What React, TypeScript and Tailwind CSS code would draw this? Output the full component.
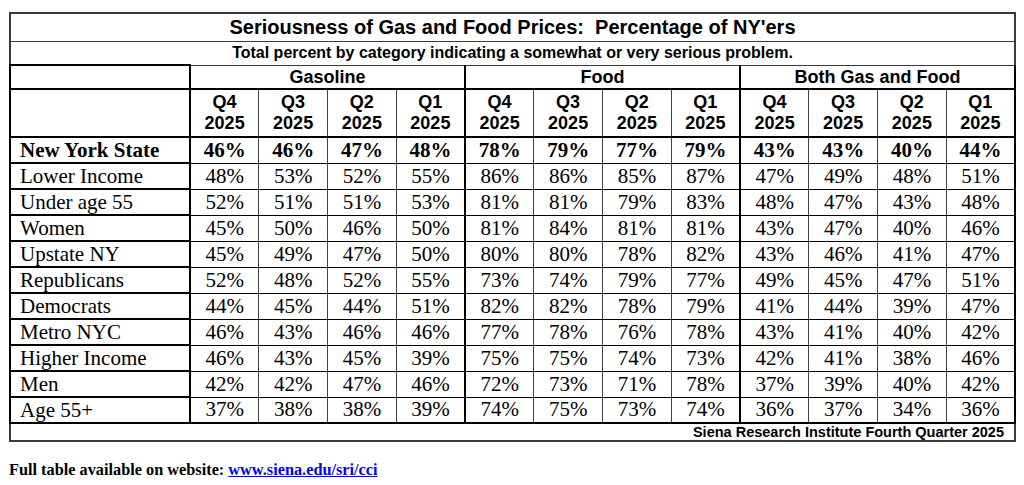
const groups = ['Gasoline', 'Food', 'Both Gas and Food'];
const quarters = ['Q4', 'Q3', 'Q2', 'Q1'];

const stateRow = [46, 46, 47, 48, 78, 79, 77, 79, 43, 43, 40, 44];

const rows: [string, number[]][] = [
  ['Lower Income', [48, 53, 52, 55, 86, 86, 85, 87, 47, 49, 48, 51]],
  ['Under age 55', [52, 51, 51, 53, 81, 81, 79, 83, 48, 47, 43, 48]],
  ['Women', [45, 50, 46, 50, 81, 84, 81, 81, 43, 47, 40, 46]],
  ['Upstate NY', [45, 49, 47, 50, 80, 80, 78, 82, 43, 46, 41, 47]],
  ['Republicans', [52, 48, 52, 55, 73, 74, 79, 77, 49, 45, 47, 51]],
  ['Democrats', [44, 45, 44, 51, 82, 82, 78, 79, 41, 44, 39, 47]],
  ['Metro NYC', [46, 43, 46, 46, 77, 78, 76, 78, 43, 41, 40, 42]],
  ['Higher Income', [46, 43, 45, 39, 75, 75, 74, 73, 42, 41, 38, 46]],
  ['Men', [42, 42, 47, 46, 72, 73, 71, 78, 37, 39, 40, 42]],
  ['Age 55+', [37, 38, 38, 39, 74, 75, 73, 74, 36, 37, 34, 36]],
];

// vertical borders: thick black at group edges, thin inside a group
function colBorder(i: number) {
  const left = i % 4 === 0 ? 'border-l-2 border-l-black' : 'border-l border-l-[#444]';
  const right = i === 11 ? 'border-r-2 border-r-black' : '';
  return `${left} ${right}`;
}

const sans = "font-['Liberation_Sans',Arial,sans-serif]";
const serif = "font-['Liberation_Serif','Times_New_Roman',serif]";

function DataRow({ label, values, bold }: { label: string; values: number[]; bold?: boolean }) {
  return (
    <tr className="h-[26px]">
      <td
        className={`border-2 border-black pl-[9px] text-left text-[21px] leading-none text-black ${serif} ${bold ? 'font-bold' : ''}`}
      >
        {label}
      </td>
      {values.map((v, i) => (
        <td
          key={i}
          className={`border-y border-y-black ${colBorder(i)} text-center text-[21px] leading-none text-black ${serif} ${bold ? 'font-bold' : ''}`}
        >
          {v}%
        </td>
      ))}
    </tr>
  );
}

export default function App() {
  return (
    <div className="min-h-[485px] w-[1024px] bg-white pl-[9px] pt-[12px]">
      <table className="w-[1007px] table-fixed border-collapse border-2 border-[#3a3a3a]">
        <colgroup>
          <col className="w-[180px]" />
          {Array.from({ length: 12 }).map((_, i) => (
            <col key={i} />
          ))}
        </colgroup>
        <tbody>
          <tr className="h-[28px]">
            <td colSpan={13} className={`border border-[#3a3a3a] text-center text-[20px] font-bold leading-none text-black ${sans}`}>
              Seriousness of Gas and Food Prices:&nbsp; Percentage of NY'ers
            </td>
          </tr>
          <tr className="h-[24px]">
            <td colSpan={13} className={`border border-[#3a3a3a] text-center text-[16px] font-bold leading-none text-black ${sans}`}>
              Total percent by category indicating a somewhat or very serious problem.
            </td>
          </tr>
          <tr className="h-[24px]">
            <td className="border-2 border-black" />
            {groups.map((g, gi) => (
              <td
                key={g}
                colSpan={4}
                className={`border-y border-y-black border-l-2 border-l-black ${gi === 2 ? 'border-r-2 border-r-black' : ''} text-center text-[18px] font-bold leading-none text-black ${sans}`}
              >
                {g}
              </td>
            ))}
          </tr>
          <tr className="h-[48px]">
            <td className="border-2 border-black" />
            {groups.flatMap((g) =>
              quarters.map((q) => ({ key: g + q, q })),
            ).map((c, i) => (
              <td
                key={c.key}
                className={`border-y-2 border-y-black ${colBorder(i)} text-center text-[18px] font-bold leading-[21px] text-black ${sans}`}
              >
                {c.q}
                <br />
                2025
              </td>
            ))}
          </tr>
          <DataRow label="New York State" values={stateRow} bold />
          {rows.map(([label, values]) => (
            <DataRow key={label} label={label} values={values} />
          ))}
          <tr className="h-[18px]">
            <td
              colSpan={13}
              className={`border-t-2 border-t-black pr-[10px] text-right text-[14.5px] font-bold leading-none text-black ${sans}`}
            >
              Siena Research Institute Fourth Quarter 2025
            </td>
          </tr>
        </tbody>
      </table>
      <p className={`mt-[20px] text-[16.3px] font-bold leading-none text-black ${serif}`}>
        Full table available on website:{' '}
        <a href="#" className="text-[#0000ff] underline">
          www.siena.edu/sri/cci
        </a>
      </p>
    </div>
  );
}
